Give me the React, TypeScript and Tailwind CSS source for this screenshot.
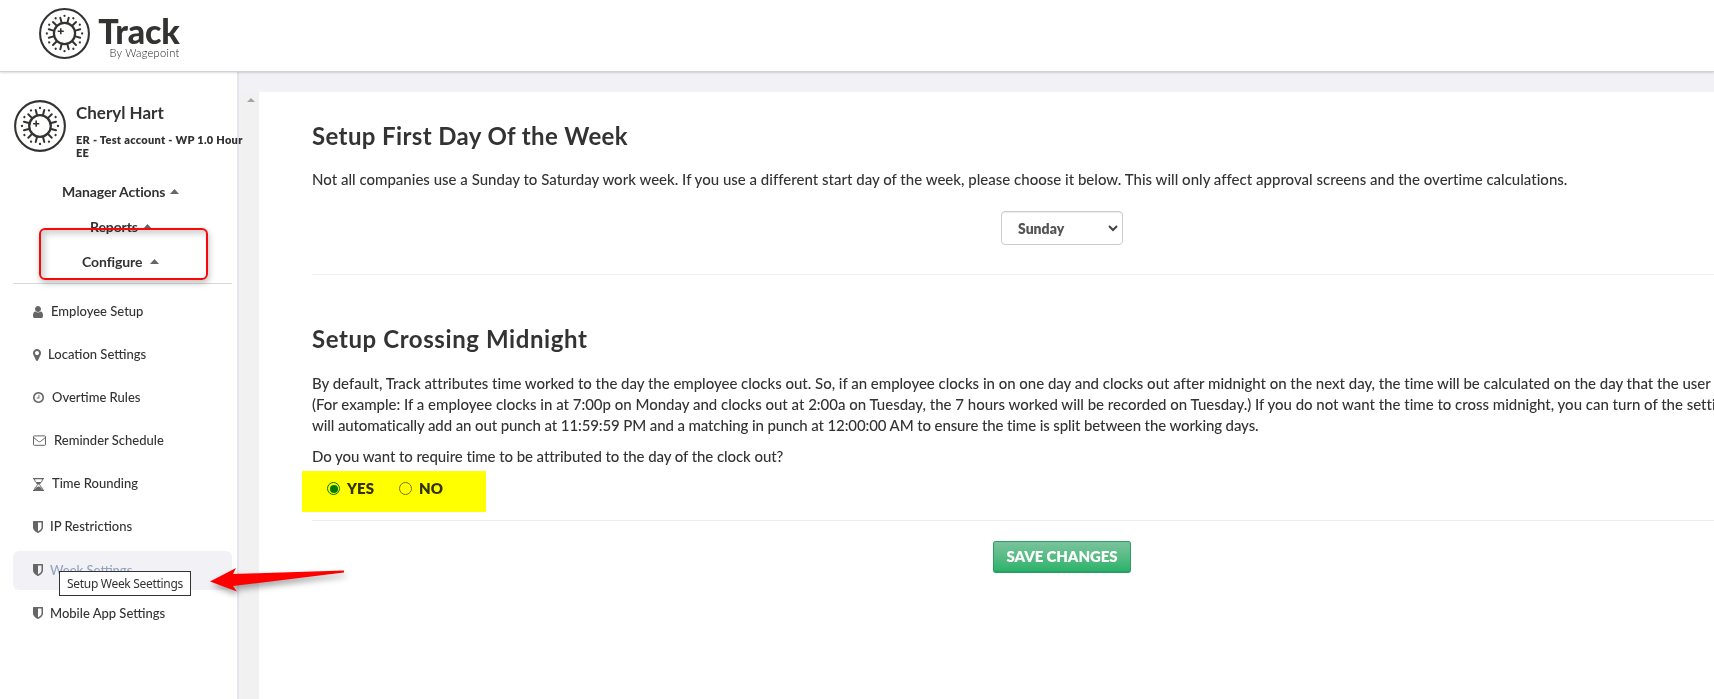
import type { ReactNode } from "react";

const ICONS = {
  user: "M1536 1399q0 109-62.5 187t-150.5 78h-854q-88 0-150.5-78t-62.5-187q0-85 8.5-160.5t31.5-152 58.5-131 94-89 134.5-34.5q131 128 313 128t313-128q76 0 134.5 34.5t94 89 58.5 131 31.5 152 8.5 160.5zm-256-887q0 159-112.5 271.5t-271.5 112.5-271.5-112.5-112.5-271.5 112.5-271.5 271.5-112.5 271.5 112.5 112.5 271.5z",
  marker:
    "M1152 640q0-106-75-181t-181-75-181 75-75 181 75 181 181 75 181-75 75-181zm256 0q0 109-33 179l-364 774q-16 33-47.5 52t-67.5 19-67.5-19-46.5-52l-365-774q-33-70-33-179 0-212 150-362t362-150 362 150 150 362z",
  clock:
    "M1024 544v448q0 14-9 23t-23 9h-320q-14 0-23-9t-9-23v-64q0-14 9-23t23-9h224v-352q0-14 9-23t23-9h64q14 0 23 9t9 23zm416 352q0-148-73-273t-198-198-273-73-273 73-198 198-73 273 73 273 198 198 273 73 273-73 198-198 73-273zm224 0q0 209-103 385.5t-279.5 279.5-385.5 103-385.5-103-279.5-279.5-103-385.5 103-385.5 279.5-279.5 385.5-103 385.5 103 279.5 279.5 103 385.5z",
  shield:
    "M1344 960v-640h-448v1137q119-63 213-137 235-184 235-360zm192-768v768q0 86-33.5 170.5t-83 150-118 127.5-126.5 103-121 77.5-89.5 49.5-42.5 20q-12 6-26 6t-26-6q-16-7-42.5-20t-89.5-49.5-121-77.5-126.5-103-118-127.5-83-150-33.5-170.5v-768q0-26 19-45t45-19h1152q26 0 45 19t19 45z",
};

function Glyph({ d, box, className }: { d: string; box: string; className: string }) {
  return (
    <svg viewBox={box} className={className} fill="currentColor">
      <path d={d} />
    </svg>
  );
}

const shield = (
  <Glyph d={ICONS.shield} box="256 128 1280 1536" className="w-2.5 h-3 mr-[7px]" />
);

const menu: { label: string; icon: ReactNode; active?: boolean }[] = [
  {
    label: "Employee Setup",
    icon: <Glyph d={ICONS.user} box="256 128 1280 1536" className="w-2.5 h-3 mr-2" />,
  },
  {
    label: "Location Settings",
    icon: <Glyph d={ICONS.marker} box="384 128 1024 1536" className="w-2 h-3 mr-[7px]" />,
  },
  {
    label: "Overtime Rules",
    icon: <Glyph d={ICONS.clock} box="128 128 1536 1536" className="w-[11px] h-[11px] mr-2" />,
  },
  {
    label: "Reminder Schedule",
    icon: (
      <svg viewBox="0 0 13 11" className="w-[13px] h-[11px] mr-2" fill="none" stroke="currentColor">
        <rect x="0.5" y="0.9" width="12" height="9.4" rx="0.8" />
        <path d="M0.7 2.6 5.4 6.4Q6.5 7.2 7.6 6.4L12.3 2.6" />
      </svg>
    ),
  },
  {
    label: "Time Rounding",
    icon: (
      <svg viewBox="0 0 11 13" className="w-[11px] h-[13px] mr-2" fill="none" stroke="currentColor">
        <path d="M0 0.6H11M0 12.4H11" strokeWidth="1.2" />
        <path d="M1.5 1C1.5 4.5 4.6 5 4.6 6.5S1.5 8.5 1.5 12M9.5 1C9.5 4.5 6.4 5 6.4 6.5S9.5 8.5 9.5 12" />
        <path d="M2.6 4H8.4L6.2 6.4H4.8ZM2 12 2.8 9.8 5.5 8.2 8.2 9.8 9 12Z" fill="currentColor" stroke="none" />
      </svg>
    ),
  },
  { label: "IP Restrictions", icon: shield },
  { label: "Week Settings", icon: shield, active: true },
  { label: "Mobile App Settings", icon: shield },
];

function SunMark({ className }: { className: string }) {
  const rays = Array.from({ length: 12 }, (_, i) => i * 30 + 15);
  return (
    <svg viewBox="-26 -26 52 52" className={className} fill="none" stroke="#333331">
      <circle r="24.9" strokeWidth="2.1" />
      <circle r="10.8" strokeWidth="2.3" />
      {rays.map((a) => (
        <g key={a} transform={`rotate(${a})`}>
          <path d="M0 -11.5V-16.6" strokeWidth="2" strokeLinecap="round" />
          <circle cy="-18" r="1.15" fill="#333331" stroke="none" transform="rotate(15)" />
        </g>
      ))}
      <path d="M-3.8 -5.4V0.8M-6.9 -2.3H-0.7" strokeWidth="1.6" />
    </svg>
  );
}

function Caret() {
  return (
    <svg viewBox="0 0 8 4" className="w-[9px] h-[5px]" fill="#666" preserveAspectRatio="none">
      <path d="M4 0 8 4H0Z" />
    </svg>
  );
}

function Header() {
  return (
    <header className="relative z-20 h-[72px] flex bg-white border-b border-[#d2d2d4] shadow-[0_1px_2px_rgba(0,0,0,0.14)]">
      <SunMark className="w-[51px] h-[51px] ml-[38.5px] mt-[7.5px] shrink-0" />
      <div className="ml-[7px] w-[83px] flex flex-col items-end whitespace-nowrap text-[#333331]">
        <div className="font-black text-[34px] leading-[36px] mt-[13px] tracking-[-0.2px]">Track</div>
        <div className="font-light text-[11px] leading-[12px] -mt-0.5 text-[#222] tracking-[0.3px]">
          By Wagepoint
        </div>
      </div>
    </header>
  );
}

function Sidebar() {
  return (
    <aside className="relative z-10 w-[239px] h-full shrink-0 bg-white border-r-2 border-[#e5e5ec]">
      <div className="flex pt-7 pl-3.5 h-[102px]">
        <SunMark className="w-[52px] h-[52px] shrink-0" />
        <div className="ml-2.5 w-[167px] shrink-0 whitespace-nowrap">
          <p className="text-[17px] leading-6 font-bold mt-px">Cheryl Hart</p>
          <p className="text-[11px] leading-[13px] font-extrabold mt-2 tracking-[0.28px]">
            ER - Test account - WP 1.0 Hour
            <br />
            EE
          </p>
        </div>
      </div>

      <nav className="text-[14px] font-bold tracking-[-0.1px]">
        <div className="h-[35px] pl-[62px] flex items-center gap-[5px]">
          Manager Actions <Caret />
        </div>
        <div className="h-[35px] pl-[90px] flex items-center gap-[5px]">
          Reports <Caret />
        </div>
        <div className="h-[35px] pl-[82px] flex items-center gap-2">
          Configure <Caret />
        </div>
      </nav>

      <ul className="ml-[13px] w-[219px] mt-1 pt-2 border-t border-[#d8d8da] text-[13px] font-medium">
        {menu.map(({ label, icon, active }) => (
          <li
            key={label}
            className={`h-[39px] mb-[4.15px] pl-5 flex items-center rounded-md whitespace-nowrap ${
              active ? "bg-[#f1f1f6] text-[#92a5bf]" : ""
            }`}
          >
            <span className="text-[#666]">{icon}</span>
            {label}
          </li>
        ))}
      </ul>

      {/* native title tooltip of the hovered item */}
      <div className="absolute left-[59px] top-[499px] w-[132px] h-[25px] bg-white border border-[#333] flex items-center justify-center font-['Noto_Sans'] text-[12px] tracking-[-0.3px] whitespace-nowrap">
        Setup Week Seettings
      </div>
    </aside>
  );
}

function Content() {
  return (
    <main className="flex-1 min-w-0 h-[607px] mt-5 bg-white overflow-hidden">
      <div className="w-[1553px] pl-[53px] whitespace-nowrap text-[15px] font-medium">
        <h2 className="text-[24px] leading-8 font-bold pt-7 tracking-[0.38px]">Setup First Day Of the Week</h2>
        <p className="leading-[21px] mt-[17px] tracking-[0.01px]">
          Not all companies use a Sunday to Saturday work week. If you use a different start day of the week, please
          choose it below. This will only affect approval screens and the overtime calculations.
        </p>
        <div className="flex justify-center mt-[21px]">
          <div className="w-[122px] h-[34px] border border-[#ccc] rounded-[4px] shadow-[inset_0_1px_1px_rgba(0,0,0,0.075)] flex items-center justify-between pl-4 pr-1 text-[14px] font-extrabold text-[#555]">
            Sunday
            <svg viewBox="0 0 10 7" className="w-2.5 h-[7px]" fill="none" stroke="#444" strokeWidth="2">
              <path d="M1 1 5 5 9 1" />
            </svg>
          </div>
        </div>
        <hr className="mt-[29px] border-[#eee]" />

        <h2 className="text-[24px] leading-8 font-bold mt-12 tracking-[0.58px]">Setup Crossing Midnight</h2>
        <div className="leading-[21px] mt-[18px]">
          <p className="tracking-[-0.02px]">
            By default, Track attributes time worked to the day the employee clocks out. So, if an employee clocks in on
            one day and clocks out after midnight on the next day, the time will be calculated on the day that the user
          </p>
          <p className="tracking-[-0.01px]">
            (For example: If a employee clocks in at 7:00p on Monday and clocks out at 2:00a on Tuesday, the 7 hours
            worked will be recorded on Tuesday.) If you do not want the time to cross midnight, you can turn of the setti
          </p>
          <p className="tracking-[-0.115px]">
            will automatically add an out punch at 11:59:59 PM and a matching in punch at 12:00:00 AM to ensure the time is
            split between the working days.
          </p>
          <p className="mt-2.5 tracking-[-0.08px]">
            Do you want to require time to be attributed to the day of the clock out?
          </p>
        </div>
        <div className="relative h-[53px] flex pt-[11px] pl-[15px] font-extrabold leading-[21px]">
          <span className="w-[13px] h-[13px] mt-1 rounded-full border border-[#007a00] flex items-center justify-center">
            <span className="w-2 h-2 rounded-full bg-[#007a00]" />
          </span>
          <span className="ml-[7px] w-[52px]">YES</span>
          <span className="w-[13px] h-[13px] mt-1 rounded-full border border-[#767676]" />
          <span className="ml-[7px]">NO</span>
          {/* highlighter stroke */}
          <div className="absolute -left-2.5 top-1 w-[184px] h-[41px] bg-[#ffff00] mix-blend-multiply" />
        </div>
        <hr className="border-[#eee]" />
        <div className="flex justify-center mt-5">
          <button className="w-[138px] h-8 rounded-[3px] border border-[#2a9d64] border-b-2 bg-linear-to-b from-[#79c39d] to-[#27b36a] text-white font-extrabold text-[15px] tracking-[-0.1px]">
            SAVE CHANGES
          </button>
        </div>
      </div>
    </main>
  );
}

function Annotations() {
  return (
    <>
      <div className="absolute z-20 left-[39px] top-[228px] w-[169px] h-[52px] rounded-md border-2 border-[#f80808] shadow-[1px_3px_6px_rgba(0,0,0,0.25),inset_4px_4px_6px_rgba(0,0,0,0.18)]" />
      <svg
        viewBox="0 0 150 40"
        className="absolute z-20 left-[205px] top-[560px] w-[150px] h-10 drop-shadow-[2px_4px_3px_rgba(0,0,0,0.35)]"
      >
        <path d="M5 21.5 31 8 28 14 139 10.5V12.5L28 26 32 31.500Z" fill="#f00" />
      </svg>
    </>
  );
}

export default function App() {
  return (
    <div className="relative w-full h-[699px] overflow-hidden bg-[#f1f1f6] text-[#333] font-[Lato,sans-serif]">
      <Header />
      <div className="flex h-[627px]">
        <Sidebar />
        <div className="w-5 mt-5 pl-[3px] shrink-0">
          <div className="h-full bg-[#f1f1f1] flex justify-center pt-1.5">
            <svg viewBox="0 0 8 4" className="w-2 h-1" fill="#a3a3a3">
              <path d="M4 0 8 4H0Z" />
            </svg>
          </div>
        </div>
        <Content />
      </div>
      <Annotations />
    </div>
  );
}
